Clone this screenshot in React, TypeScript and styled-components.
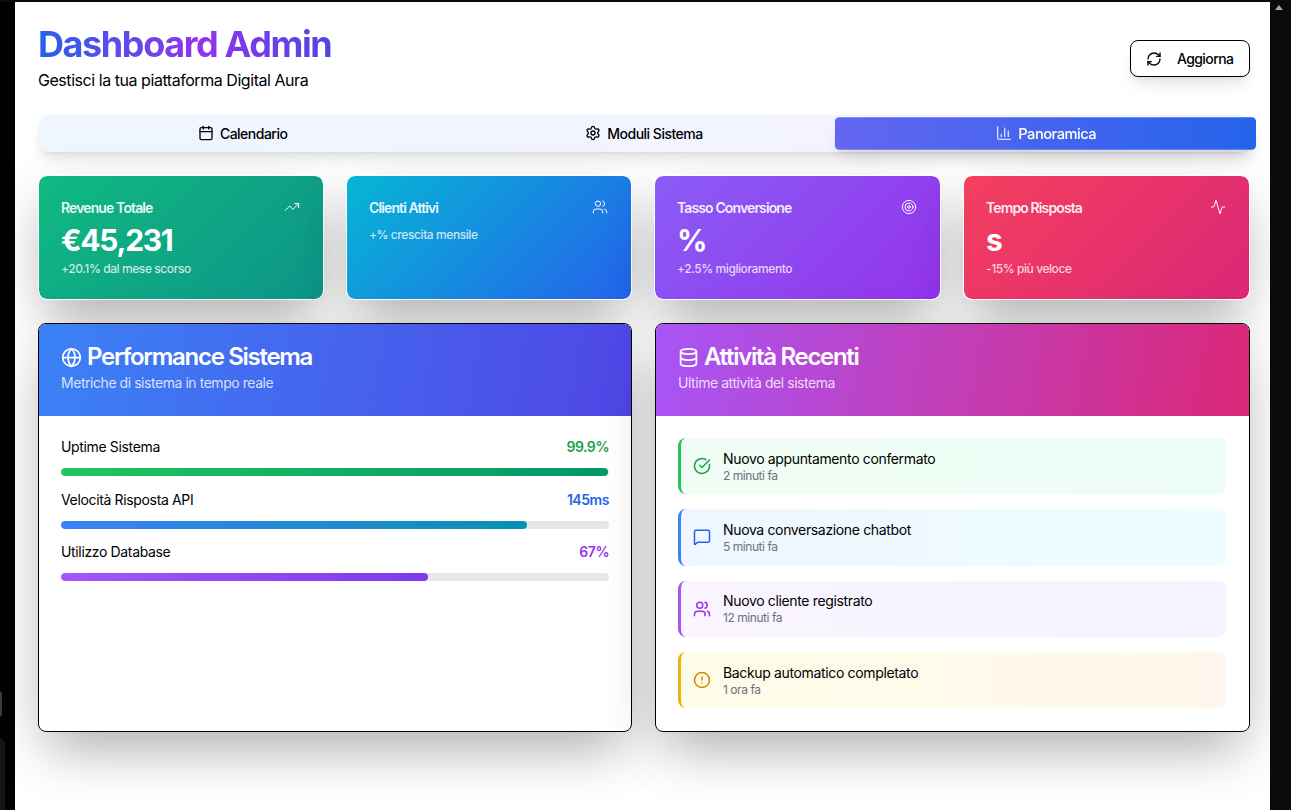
import React from 'react';
import styled, { createGlobalStyle } from 'styled-components';
import {
  Activity,
  Calendar,
  ChartColumn,
  CircleAlert,
  CircleCheckBig,
  Database,
  Globe,
  MessageSquare,
  RefreshCw,
  Settings,
  Target,
  TrendingUp,
  Users,
} from 'lucide-react';

const bigShadow = '0 25px 50px -12px rgba(0, 0, 0, 0.25), 0 20px 60px rgba(0, 0, 0, 0.1)';
const softShadow = '0 10px 15px -3px rgba(0, 0, 0, 0.1), 0 4px 6px -4px rgba(0, 0, 0, 0.1)';

const GlobalStyle = createGlobalStyle`
  html, body {
    margin: 0;
    padding: 0;
    height: 100%;
    overflow: hidden;
    background: #000;
    font-family: 'Inter', 'Liberation Sans', sans-serif;
  }
  * { box-sizing: border-box; }
`;

const Shell = styled.div`
  display: flex;
  width: 1291px;
  height: 810px;
  padding-top: 2px;
  background: #0b0b0b;
  overflow: hidden;
`;

const LeftGutter = styled.div`
  position: relative;
  width: 15px;
  flex: none;
  background: #000;
`;

const GutterTab = styled.div`
  position: absolute;
  left: -6px;
  top: 689px;
  width: 8px;
  height: 26px;
  border-radius: 3px;
  background: #3a3a3e;
`;

const GutterPanel = styled.div`
  position: absolute;
  left: -10px;
  top: 736px;
  width: 15px;
  height: 90px;
  border-radius: 6px;
  background: #141414;
`;

const RightGutter = styled.div`
  flex: none;
  width: 21px;
  padding: 3px 0 0 3px;
  color: #a8a8a8;
  background: #0b0b0b;
`;

const ScrollArrow = styled.div`
  width: 0;
  height: 0;
  margin-left: 2px;
  border-left: 4px solid transparent;
  border-right: 4px solid transparent;
  border-bottom: 5px solid currentColor;
`;

const Page = styled.main`
  flex: none;
  width: 1255px;
  background: #fff;
  padding: 21px 20px 0 23px;
  color: #000;
  letter-spacing: -0.45px;
  overflow: hidden;
`;

const Header = styled.header`
  display: flex;
  justify-content: space-between;
  align-items: center;
  height: 68px;
`;

const Title = styled.h1`
  margin: 0;
  width: fit-content;
  font-size: 36px;
  line-height: 40px;
  font-weight: 700;
  letter-spacing: -1.4px;
  color: transparent;
  background: linear-gradient(90deg, #2563eb, #9333ea 55%, #4f46e5);
  -webkit-background-clip: text;
  background-clip: text;
`;

const Subtitle = styled.p`
  margin: 6px 0 0;
  font-size: 16px;
  line-height: 20px;
  color: #000;
`;

const RefreshButton = styled.button`
  display: flex;
  align-items: center;
  gap: 15px;
  width: 120px;
  height: 37px;
  margin-top: 3px;
  padding: 0 15px;
  background: #fff;
  border: 1px solid #000;
  border-radius: 8px;
  box-shadow: ${softShadow};
  font: 500 14px 'Inter', sans-serif;
  letter-spacing: -0.6px;
  color: #000;

  svg {
    flex: none;
  }
`;

const TabList = styled.nav`
  display: grid;
  grid-template-columns: repeat(3, 1fr);
  height: 37px;
  margin-top: 24px;
  padding: 3px 4px 5px;
  align-items: center;
  background: linear-gradient(90deg, #eff6ff, #f5f3ff);
  border-radius: 12px;
  box-shadow: ${softShadow};
`;

const Tab = styled.div<{ $active?: boolean }>`
  display: flex;
  align-items: center;
  justify-content: center;
  gap: 6px;
  height: 30.5px;
  border-radius: 4px;
  font-size: 14px;
  font-weight: 500;
  letter-spacing: -0.5px;
  color: ${(p) => (p.$active ? '#fff' : '#000')};
  background: ${(p) => (p.$active ? 'linear-gradient(90deg, #6366f1, #2563eb)' : 'transparent')};
  transform: ${(p) => (p.$active ? 'scale(1.05)' : 'none')};
  box-shadow: ${(p) => (p.$active ? softShadow : 'none')};
`;

const StatGrid = styled.section`
  display: grid;
  grid-template-columns: 286px 286px 287px 287px;
  gap: 22px;
  margin-top: 23px;
`;

const StatCard = styled.article<{ $from: string; $to: string }>`
  height: 125px;
  padding: 24px 23px 0 22px;
  border-radius: 9px;
  border: 1px solid #fff;
  background: linear-gradient(135deg, ${(p) => p.$from}, ${(p) => p.$to}) padding-box, #fff border-box;
  color: #fff;
  box-shadow: ${bigShadow};
`;

const StatTop = styled.div`
  display: flex;
  justify-content: space-between;
  align-items: center;
  height: 14px;
`;

const StatLabel = styled.span`
  font-size: 14px;
  font-weight: 600;
  letter-spacing: -0.88px;
  color: rgba(255, 255, 255, 0.92);
`;

const StatValue = styled.div`
  margin-top: 8px;
  font-size: 30px;
  line-height: 36px;
  font-weight: 700;
  letter-spacing: -1.3px;
`;

const StatNote = styled.div<{ $tight?: boolean }>`
  margin-top: ${(p) => (p.$tight ? '13px' : '3px')};
  font-size: 12px;
  line-height: 16px;
  font-weight: 500;
  letter-spacing: -0.42px;
  color: rgba(255, 255, 255, 0.78);
`;

const PanelGrid = styled.section`
  display: grid;
  grid-template-columns: 594px 595px;
  gap: 23px;
  margin-top: 23px;
`;

const Panel = styled.article`
  height: 409px;
  border: 1px solid #000;
  border-radius: 8px;
  background: #fff;
  overflow: hidden;
`;

const PanelShadow = styled.div`
  border-radius: 8px;
  box-shadow: ${bigShadow};
`;

const PanelHead = styled.div<{ $bg: string }>`
  height: 92px;
  padding: 20px 22px 0;
  background: ${(p) => p.$bg};
  color: #fff;
`;

const PanelTitle = styled.h2`
  display: flex;
  align-items: center;
  gap: 5px;
  margin: 0;
  font-size: 24px;
  line-height: 26px;
  font-weight: 600;
  letter-spacing: -1.3px;
`;

const PanelSub = styled.p`
  margin: 3px 0 0;
  font-size: 14px;
  line-height: 20px;
  color: rgba(255, 255, 255, 0.8);
`;

const MetricBody = styled.div`
  display: flex;
  flex-direction: column;
  padding: 21px 22px 0;
  gap: 13.5px;
`;

const MetricTop = styled.div`
  display: flex;
  justify-content: space-between;
  font-size: 14px;
  line-height: 20px;
  font-weight: 400;
  letter-spacing: -0.35px;
`;

const MetricValue = styled.span<{ $color: string }>`
  font-weight: 600;
  letter-spacing: -0.45px;
  color: ${(p) => p.$color};
`;

const BarTrack = styled.div`
  height: 8px;
  margin-top: 11px;
  border-radius: 4px;
  background: #e5e7eb;
  overflow: hidden;
`;

const BarFill = styled.div<{ $bg: string }>`
  height: 100%;
  border-radius: 4px;
  background: ${(p) => p.$bg};
`;

const ActivityList = styled.div`
  display: flex;
  flex-direction: column;
  gap: 15px;
  padding: 22px 23px 0 22px;
`;

const ActivityRow = styled.div<{ $border: string; $bg: string }>`
  display: flex;
  align-items: center;
  gap: 12px;
  height: 56.3px;
  padding-left: 12px;
  border-left: 3px solid ${(p) => p.$border};
  border-radius: 8px;
  background: ${(p) => p.$bg};
`;

const ActivityIcon = styled.span<{ $color: string }>`
  display: flex;
  color: ${(p) => p.$color};
`;

const ActivityText = styled.div`
  padding-top: 1px;
`;

const ActivityTitle = styled.div`
  font-size: 14px;
  line-height: 16px;
  font-weight: 400;
  letter-spacing: -0.35px;
  color: #000;
`;

const ActivityTime = styled.div`
  margin-top: 2px;
  font-size: 12px;
  line-height: 14px;
  color: #6b7280;
`;

const stats = [
  { label: 'Revenue Totale', value: '€45,231', note: '+20.1% dal mese scorso', icon: TrendingUp, from: '#10b981', to: '#0d9488' },
  { label: 'Clienti Attivi', value: '', note: '+% crescita mensile', icon: Users, from: '#06b6d4', to: '#2563eb' },
  { label: 'Tasso Conversione', value: '%', note: '+2.5% miglioramento', icon: Target, from: '#8b5cf6', to: '#9333ea' },
  { label: 'Tempo Risposta', value: 's', note: '-15% più veloce', icon: Activity, from: '#f43f5e', to: '#db2777' },
];

const metrics = [
  { label: 'Uptime Sistema', value: '99.9%', color: '#16a34a', pct: 99.9, bg: 'linear-gradient(90deg, #22c55e, #059669)' },
  { label: 'Velocità Risposta API', value: '145ms', color: '#2563eb', pct: 85, bg: 'linear-gradient(90deg, #3b82f6, #0891b2)' },
  { label: 'Utilizzo Database', value: '67%', color: '#9333ea', pct: 67, bg: 'linear-gradient(90deg, #a855f7, #7c3aed)' },
];

const activities = [
  { title: 'Nuovo appuntamento confermato', time: '2 minuti fa', icon: CircleCheckBig, color: '#16a34a', border: '#22c55e', bg: 'linear-gradient(90deg, #f0fdf4, #ecfdf5)' },
  { title: 'Nuova conversazione chatbot', time: '5 minuti fa', icon: MessageSquare, color: '#2563eb', border: '#3b82f6', bg: 'linear-gradient(90deg, #eff6ff, #ecfeff)' },
  { title: 'Nuovo cliente registrato', time: '12 minuti fa', icon: Users, color: '#9333ea', border: '#a855f7', bg: 'linear-gradient(90deg, #faf5ff, #f5f3ff)' },
  { title: 'Backup automatico completato', time: '1 ora fa', icon: CircleAlert, color: '#ca8a04', border: '#eab308', bg: 'linear-gradient(90deg, #fefce8, #fff7ed)' },
];

const App = () => {
  return (
    <>
      <GlobalStyle />
      <Shell>
        <LeftGutter>
          <GutterTab />
          <GutterPanel />
        </LeftGutter>
        <Page>
          <Header>
            <div>
              <Title>Dashboard Admin</Title>
              <Subtitle>Gestisci la tua piattaforma Digital Aura</Subtitle>
            </div>
            <RefreshButton>
              <RefreshCw size={16} />
              Aggiorna
            </RefreshButton>
          </Header>

          <TabList>
            <Tab><Calendar size={16} />Calendario</Tab>
            <Tab><Settings size={16} />Moduli Sistema</Tab>
            <Tab $active><ChartColumn size={16} strokeWidth={1.5} />Panoramica</Tab>
          </TabList>

          <StatGrid>
            {stats.map((s) => {
              const Icon = s.icon;
              return (
                <StatCard key={s.label} $from={s.from} $to={s.to}>
                  <StatTop>
                    <StatLabel>{s.label}</StatLabel>
                    <Icon size={16} strokeWidth={1.5} />
                  </StatTop>
                  {s.value && <StatValue>{s.value}</StatValue>}
                  <StatNote $tight={!s.value}>{s.note}</StatNote>
                </StatCard>
              );
            })}
          </StatGrid>

          <PanelGrid>
            <PanelShadow>
              <Panel>
                <PanelHead $bg="linear-gradient(100deg, #3b82f6, #4f46e5)">
                  <PanelTitle><Globe size={21} />Performance Sistema</PanelTitle>
                  <PanelSub>Metriche di sistema in tempo reale</PanelSub>
                </PanelHead>
                <MetricBody>
                  {metrics.map((m) => (
                    <div key={m.label}>
                      <MetricTop>
                        <span>{m.label}</span>
                        <MetricValue $color={m.color}>{m.value}</MetricValue>
                      </MetricTop>
                      <BarTrack>
                        <BarFill $bg={m.bg} style={{ width: `${m.pct}%` }} />
                      </BarTrack>
                    </div>
                  ))}
                </MetricBody>
              </Panel>
            </PanelShadow>
            <PanelShadow>
              <Panel>
                <PanelHead $bg="linear-gradient(100deg, #a855f7, #db2777)">
                  <PanelTitle><Database size={21} />Attività Recenti</PanelTitle>
                  <PanelSub>Ultime attività del sistema</PanelSub>
                </PanelHead>
                <ActivityList>
                  {activities.map((a) => {
                    const Icon = a.icon;
                    return (
                      <ActivityRow key={a.title} $border={a.border} $bg={a.bg}>
                        <ActivityIcon $color={a.color}><Icon size={18} /></ActivityIcon>
                        <ActivityText>
                          <ActivityTitle>{a.title}</ActivityTitle>
                          <ActivityTime>{a.time}</ActivityTime>
                        </ActivityText>
                      </ActivityRow>
                    );
                  })}
                </ActivityList>
              </Panel>
            </PanelShadow>
          </PanelGrid>
        </Page>
        <RightGutter>
          <ScrollArrow />
        </RightGutter>
      </Shell>
    </>
  );
};

export default App;
